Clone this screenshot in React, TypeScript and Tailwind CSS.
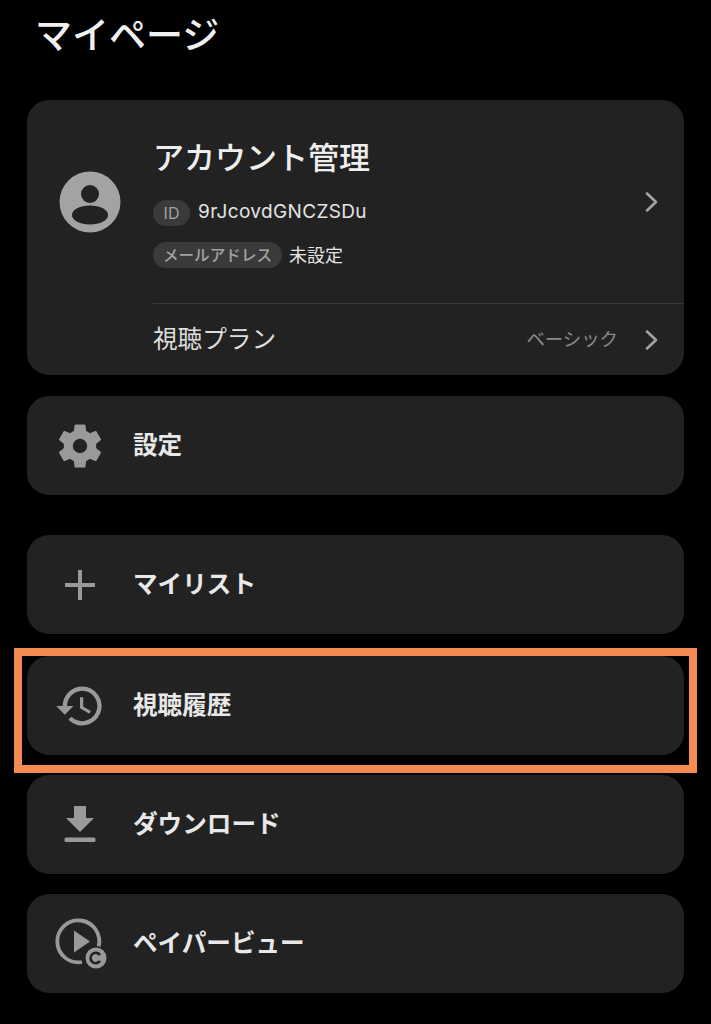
import { ReactNode } from "react";

const font = "font-['Inter','Noto_Sans_CJK_JP',sans-serif]";

const Chevron = () => (
    <svg width="16" height="22" viewBox="0 0 16 22" fill="none" stroke="#a3a3a3" strokeWidth="2.6" strokeLinecap="round" strokeLinejoin="round">
        <path d="M4 2.5 L13 11 L4 19.5" />
    </svg>
);

const Gear = () => (
    <svg width="54" height="54" viewBox="0 0 24 24" fill="#999999">
        <path d="M19.14 12.94c.04-.3.06-.61.06-.94 0-.32-.02-.64-.07-.94l2.03-1.58a.49.49 0 0 0 .12-.61l-1.92-3.32a.488.488 0 0 0-.59-.22l-2.39.96c-.5-.38-1.03-.7-1.62-.94l-.36-2.54a.484.484 0 0 0-.48-.41h-3.84c-.24 0-.43.17-.47.41l-.36 2.54c-.59.24-1.13.57-1.62.94l-2.39-.96c-.22-.08-.47 0-.59.22L2.74 8.87c-.12.21-.08.47.12.61l2.03 1.58c-.05.3-.09.63-.09.94s.02.64.07.94l-2.03 1.58a.49.49 0 0 0-.12.61l1.92 3.32c.12.22.37.29.59.22l2.39-.96c.5.38 1.03.7 1.62.94l.36 2.54c.05.24.24.41.48.41h3.84c.24 0 .44-.17.47-.41l.36-2.54c.59-.24 1.13-.56 1.62-.94l2.39.96c.22.08.47 0 .59-.22l1.92-3.32c.12-.22.07-.47-.12-.61l-2.01-1.58zM12 15.2A3.2 3.2 0 1 1 12 8.8a3.2 3.2 0 0 1 0 6.4z" />
    </svg>
);

const Plus = () => (
    <svg width="48" height="48" viewBox="0 0 48 48" fill="#999999">
        <rect x="22" y="9" width="4" height="30" />
        <rect x="9" y="22" width="30" height="4" />
    </svg>
);

const History = () => (
    <svg width="52" height="52" viewBox="0 0 24 24" fill="#999999">
        <path d="M13 3a9 9 0 0 0-9 9H1l3.89 3.89.07.14L9 12H6a7 7 0 1 1 2.05 4.95l-1.42 1.42A9 9 0 1 0 13 3z" />
        <path d="M12 8v5l4.28 2.54.72-1.21-3.5-2.08V8H12z" />
    </svg>
);

const Download = () => (
    <svg width="48" height="48" viewBox="0 0 48 48" fill="#999999">
        <path d="M18 5h12v12h8L24 31 10 17h8z" />
        <rect x="8.5" y="36.5" width="31" height="4.5" rx="1.5" />
    </svg>
);

const PayPerView = () => (
    <svg width="54" height="54" viewBox="0 0 54 54" className="ml-[4px]">
        <path d="M43.5 30 A21 21 0 1 0 27 45" fill="none" stroke="#999999" strokeWidth="3.8" />
        <path d="M19 13.5 L35 24.5 L19 35.5 Z" fill="#999999" />
        <circle cx="41" cy="41" r="12" fill="#222222" />
        <circle cx="41" cy="41" r="10.5" fill="#999999" />
        <path d="M45 38 A5.2 5.2 0 1 0 45 44" fill="none" stroke="#222222" strokeWidth="2.6" />
    </svg>
);

const Avatar = () => (
    <svg width="62" height="62" viewBox="0 0 62 62">
        <circle cx="31" cy="31" r="30.5" fill="#a3a3a3" />
        <circle cx="31" cy="23" r="9" fill="#222222" />
        <ellipse cx="31" cy="44" rx="18" ry="9.5" fill="#222222" />
    </svg>
);

function MenuRow({ icon, label }: { icon: ReactNode; label: string }) {
    return (
        <div className="flex h-[99px] items-center rounded-[22px] bg-[#222222]">
            <div className="flex w-[106px] shrink-0 items-center justify-center pr-[1px]">
                {icon}
            </div>
            <div className="text-[24.6px] font-bold text-[#e8e8e8]">{label}</div>
        </div>
    );
}

export default function App() {
    return (
        <div className={`h-[1024px] w-[711px] overflow-hidden bg-black ${font}`}>
            <div className="pl-[35px] pt-[13px] text-[37px] leading-[46px] font-medium text-[#f0f0f0]">
                マイページ
            </div>

            <div className="mx-[27px] mt-[41px] h-[275px] rounded-[22px] bg-[#222222]">
                <div className="flex h-[203px] items-center">
                    <div className="ml-[32px] mr-[32px] shrink-0">
                        <Avatar />
                    </div>
                    <div className="flex-1 pt-[2px]">
                        <div className="text-[31px] leading-[44px] font-medium text-[#eeeeee]">
                            アカウント管理
                        </div>
                        <div className="mt-[18px] flex items-center gap-[8px]">
                            <span className="flex h-[26px] w-[37px] items-center justify-center rounded-full bg-[#3a3a3a] text-[16px] text-[#a3a3a3]">
                                ID
                            </span>
                            <span className="text-[19px] tracking-[0.35px] text-[#e4e4e4]">9rJcovdGNCZSDu</span>
                        </div>
                        <div className="mt-[15px] flex items-center gap-[7px]">
                            <span className="flex h-[26px] w-[129px] items-center justify-center rounded-full bg-[#3a3a3a] text-[15.6px] font-medium text-[#a3a3a3]">
                                メールアドレス
                            </span>
                            <span className="text-[18px] text-[#e4e4e4]">未設定</span>
                        </div>
                    </div>
                    <div className="mr-[25px] flex shrink-0 items-center">
                        <Chevron />
                    </div>
                </div>
                <div className="ml-[126px] flex h-[72px] items-center border-t border-[#3a3a3a] pr-[25px]">
                    <div className="flex-1 text-[24.6px] text-[#dddddd]">視聴プラン</div>
                    <div className="mr-[25px] text-[18.4px] text-[#8a8a8a]">ベーシック</div>
                    <Chevron />
                </div>
            </div>

            <div className="mx-[27px] mt-[21px]">
                <MenuRow icon={<Gear />} label="設定" />
            </div>

            <div className="mx-[27px] mt-[40px]">
                <MenuRow icon={<Plus />} label="マイリスト" />
            </div>

            {/* highlighted row, orange frame sits on top of it */}
            <div className="relative mx-[27px] mt-[22px]">
                <MenuRow icon={<History />} label="視聴履歴" />
                <div className="absolute left-[-13px] right-[-13px] top-[-8px] bottom-[-18px] border-[8px] border-[#f48c52]" />
            </div>

            <div className="mx-[27px] mt-[20px]">
                <MenuRow icon={<Download />} label="ダウンロード" />
            </div>

            <div className="mx-[27px] mt-[20px]">
                <MenuRow icon={<PayPerView />} label="ペイパービュー" />
            </div>
        </div>
    );
}
